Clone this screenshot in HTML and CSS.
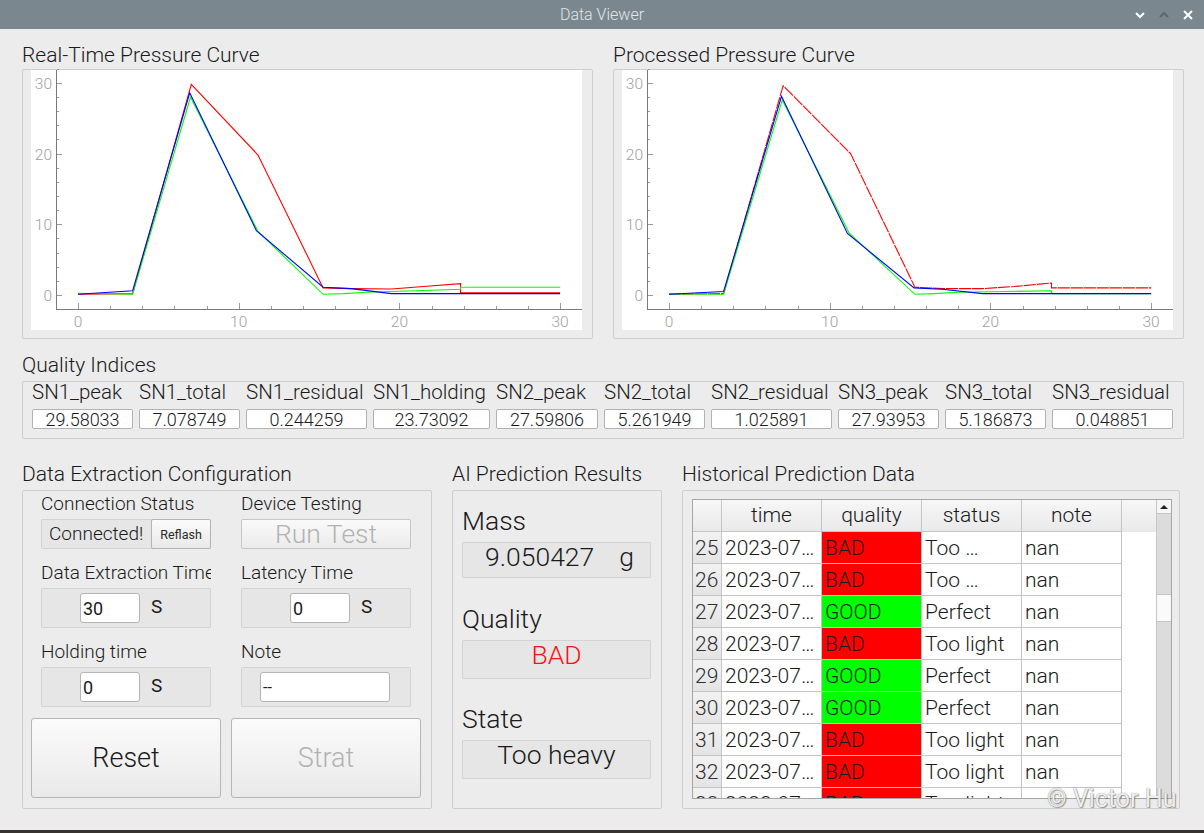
FILE: index.html
```html
<!DOCTYPE html>
<html lang="en">
  <head>
    <meta charset="UTF-8" />
    <meta name="viewport" content="width=device-width, initial-scale=1.0" />
    <title>Data Viewer</title>
    <link rel="stylesheet" href="styles.css">
  </head>

  <body>
    <div class="window">
      <div class="titlebar">
        <div></div>
        <div class="title">Data Viewer</div>
        <div class="controls">
          <svg width="70" height="29" viewBox="0 0 70 29">
            <polyline points="2,13 6,17 10,13" fill="none" stroke="#ffffff" stroke-width="2" />
            <polyline points="26,17 30,13 34,17" fill="none" stroke="#5d676c" stroke-width="2" />
            <line x1="50" y1="11" x2="58" y2="19" stroke="#ffffff" stroke-width="2" />
            <line x1="58" y1="11" x2="50" y2="19" stroke="#ffffff" stroke-width="2" />
          </svg>
        </div>
      </div>

      <div class="content">
        <div class="charts">
          <div class="panel">
            <h2 class="heading">Real-Time Pressure Curve</h2>
            <div class="chart-box"><svg class="plot" id="plot1" width="551" height="260"></svg></div>
          </div>
          <div class="panel">
            <h2 class="heading">Processed Pressure Curve</h2>
            <div class="chart-box"><svg class="plot" id="plot2" width="551" height="260"></svg></div>
          </div>
        </div>

        <h2 class="heading quality-title">Quality Indices</h2>
        <div class="indices">
          <div class="index w101"><div class="index-name">SN1_peak</div><div class="index-value">29.58033</div></div>
          <div class="index w101"><div class="index-name">SN1_total</div><div class="index-value">7.078749</div></div>
          <div class="index w121"><div class="index-name">SN1_residual</div><div class="index-value">0.244259</div></div>
          <div class="index w117"><div class="index-name">SN1_holding</div><div class="index-value">23.73092</div></div>
          <div class="index w102"><div class="index-name">SN2_peak</div><div class="index-value">27.59806</div></div>
          <div class="index w101"><div class="index-name">SN2_total</div><div class="index-value">5.261949</div></div>
          <div class="index w121"><div class="index-name">SN2_residual</div><div class="index-value">1.025891</div></div>
          <div class="index w101"><div class="index-name">SN3_peak</div><div class="index-value">27.93953</div></div>
          <div class="index w101"><div class="index-name">SN3_total</div><div class="index-value">5.186873</div></div>
          <div class="index w121"><div class="index-name">SN3_residual</div><div class="index-value">0.048851</div></div>
        </div>

        <div class="bottom">
          <div class="config-panel">
            <h2 class="heading">Data Extraction Configuration</h2>
            <div class="group config-box">
              <div class="cfg-row">
                <div class="cfg-item">
                  <div class="cfg-label">Connection Status</div>
                  <div class="field status-field">
                    <span class="status-text">Connected!</span>
                    <button class="small-btn">Reflash</button>
                  </div>
                </div>
                <div class="cfg-item">
                  <div class="cfg-label">Device Testing</div>
                  <button class="run-btn">Run Test</button>
                </div>
              </div>
              <div class="cfg-row">
                <div class="cfg-item">
                  <div class="cfg-label clip">Data Extraction Time</div>
                  <div class="field unit-field pad-a">
                    <div class="num-input">30</div><span class="unit">S</span>
                  </div>
                </div>
                <div class="cfg-item">
                  <div class="cfg-label">Latency Time</div>
                  <div class="field unit-field pad-b">
                    <div class="num-input">0</div><span class="unit">S</span>
                  </div>
                </div>
              </div>
              <div class="cfg-row">
                <div class="cfg-item">
                  <div class="cfg-label">Holding time</div>
                  <div class="field unit-field pad-a">
                    <div class="num-input">0</div><span class="unit">S</span>
                  </div>
                </div>
                <div class="cfg-item">
                  <div class="cfg-label">Note</div>
                  <div class="field unit-field note-field">
                    <div class="num-input note-input">--</div>
                  </div>
                </div>
              </div>
              <div class="cfg-buttons">
                <button class="big-btn">Reset</button>
                <button class="big-btn disabled">Strat</button>
              </div>
            </div>
          </div>

          <div class="ai-panel">
            <h2 class="heading">AI Prediction Results</h2>
            <div class="group ai-box">
              <div class="ai-label">Mass</div>
              <div class="ai-value mass"><span>9.050427</span><span>g</span></div>
              <div class="ai-label gap-q">Quality</div>
              <div class="ai-value tall bad">BAD</div>
              <div class="ai-label gap-s">State</div>
              <div class="ai-value tall">Too heavy</div>
            </div>
          </div>

          <div class="history-panel">
            <h2 class="heading">Historical Prediction Data</h2>
            <div class="group history-box">
              <div class="table-frame">
                <div class="table-view">
                  <div class="thead">
                    <div class="cell rh"></div>
                    <div class="cell hc">time</div>
                    <div class="cell hc">quality</div>
                    <div class="cell hc">status</div>
                    <div class="cell hc">note</div>
                  </div>
                  <div id="rows"></div>
                </div>
                <div class="scrollbar">
                  <div class="sb-btn"><svg width="14" height="14" viewBox="0 0 14 14"><polygon points="3,9 7,5 11,9" fill="#222" /></svg></div>
                  <div class="sb-handle"></div>
                </div>
              </div>
            </div>
          </div>
        </div>
      </div>

      <div class="watermark">© Victor Hu</div>
    </div>

    <script>
      const history = [
        [25, "BAD", "Too …"],
        [26, "BAD", "Too …"],
        [27, "GOOD", "Perfect"],
        [28, "BAD", "Too light"],
        [29, "GOOD", "Perfect"],
        [30, "GOOD", "Perfect"],
        [31, "BAD", "Too light"],
        [32, "BAD", "Too light"],
        [33, "BAD", "Too light"]
      ];

      document.getElementById("rows").innerHTML = history
        .map(
          (r) =>
            `<div class="trow">
              <div class="cell rh">${r[0]}</div>
              <div class="cell td">2023-07…</div>
              <div class="cell td ${r[1] === "BAD" ? "red" : "green"}">${r[1]}</div>
              <div class="cell td">${r[2]}</div>
              <div class="cell td">nan</div>
            </div>`
        )
        .join("");

      // pixel mapping inside the white plot area
      function px(x) {
        return 47 + x * 16.07;
      }
      function py(v) {
        return 225 - v * 7.07;
      }

      function drawChart(id, series) {
        let s = "";
        s += `<line x1="25.5" y1="0" x2="25.5" y2="239.5" stroke="#7a7a7a" />`;
        s += `<line x1="25" y1="239.5" x2="551" y2="239.5" stroke="#7a7a7a" />`;
        for (let x = 0; x <= 30; x += 2) {
          const len = x % 10 === 0 ? 6 : 3;
          const X = Math.round(px(x)) + 0.5;
          s += `<line x1="${X}" y1="239" x2="${X}" y2="${239 - len}" stroke="#9a9a9a" />`;
        }
        for (let v = 0; v <= 32; v += 2) {
          const len = v % 10 === 0 ? 5 : 2;
          const Y = Math.round(py(v)) + 0.5;
          s += `<line x1="26" y1="${Y}" x2="${26 + len}" y2="${Y}" stroke="#9a9a9a" />`;
        }
        [0, 10, 20, 30].forEach((v) => {
          s += `<text x="21" y="${py(v) + 6}" text-anchor="end" class="tick">${v}</text>`;
          s += `<text x="${px(v)}" y="257" text-anchor="middle" class="tick">${v}</text>`;
        });
        series.forEach((line) => {
          const pts = line.points.map((p) => px(p[0]).toFixed(1) + "," + py(p[1]).toFixed(1)).join(" ");
          s += `<polyline points="${pts}" fill="none" stroke="${line.color}" stroke-width="1.1" ${line.dash ? 'stroke-dasharray="' + line.dash + '"' : ""} />`;
        });
        document.getElementById(id).innerHTML = s;
      }

      drawChart("plot1", [
        { color: "#ff0000", points: [[0, 0.1], [3.4, 0.2], [7.05, 29.8], [11.2, 19.8], [15.25, 1.0], [17, 0.9], [19.5, 0.85], [21.5, 1.2], [23.8, 1.6], [23.8, 0.3], [30, 0.3]] },
        { color: "#00ff00", points: [[0, 0.25], [3.4, 0.1], [7.0, 28], [11.2, 9], [15.25, 0.1], [16.5, 0.2], [18, 0.4], [21, 0.6], [23.8, 0.8], [23.8, 1.1], [30, 1.1]] },
        { color: "#0000ff", points: [[0, 0.1], [3.4, 0.6], [6.95, 28.6], [11.1, 9.1], [15.25, 1.1], [17, 0.9], [19.5, 0.2], [30, 0.2]] }
      ]);

      drawChart("plot2", [
        { color: "#ff0000", dash: "12 1", points: [[0, 0.1], [3.4, 0.2], [7.1, 29.6], [11.3, 20], [15.3, 1.1], [17, 0.9], [19.5, 0.9], [21.5, 1.2], [23.8, 1.7], [23.8, 1.0], [30, 1.0]] },
        { color: "#00ff00", points: [[0, 0.15], [3.4, 0.1], [7.05, 27.6], [11.2, 8.8], [15.3, 0.1], [16.5, 0.2], [18, 0.4], [21, 0.5], [23.8, 0.6], [23.8, 0.2], [30, 0.2]] },
        { color: "#0000ff", points: [[0, 0.1], [3.4, 0.5], [7.0, 28.1], [11.1, 8.7], [15.25, 1.0], [17, 0.8], [19.5, 0.2], [30, 0.2]] }
      ]);
    </script>
  </body>
</html>
```

FILE: styles.css
```css
* {
  box-sizing: border-box;
}

body {
  margin: 0;
  background-color: #3a332d;
  font-family: Roboto, "Liberation Sans", sans-serif;
  font-weight: 300;
  color: #1a1a1a;
}

.window {
  position: relative;
  width: 1204px;
  height: 830px;
  background-color: #ececec;
  overflow: hidden;
}

.titlebar {
  display: grid;
  grid-template-columns: 1fr auto 1fr;
  align-items: center;
  height: 29px;
  background-color: #7b878e;
}

.titlebar .title {
  color: #e2e6e9;
  font-size: 16px;
}

.titlebar .controls {
  display: flex;
  justify-content: flex-end;
}

.titlebar svg {
  display: block;
}

.content {
  padding: 14px 20px 0 22px;
}

.heading {
  margin: 0;
  font-size: 21px;
  font-weight: 300;
  line-height: 24px;
  color: #1a1a1a;
  white-space: nowrap;
}

/* charts */

.charts {
  display: flex;
  gap: 20px;
}

.panel {
  width: 571px;
}

.panel .heading {
  margin-bottom: 2px;
}

.chart-box {
  height: 270px;
  border: 1px solid #cecece;
  border-radius: 2px;
  padding: 0 10px 8px 8px;
}

.plot {
  display: block;
  background-color: #ffffff;
  overflow: visible;
}

.plot .tick {
  font-family: Roboto, "Liberation Sans", sans-serif;
  font-weight: 300;
  font-size: 15.5px;
  fill: #a0a0a0;
}

/* quality indices */

.quality-title {
  margin-top: 14px;
  margin-bottom: 4px;
}

.indices {
  display: flex;
  gap: 6px;
  height: 58px;
  border: 1px solid #cecece;
  border-radius: 2px;
  padding: 1px 0 0 9px;
}

.index-name {
  font-size: 20.5px;
  line-height: 18px;
  white-space: nowrap;
}

.index-value {
  margin-top: 8px;
  height: 20px;
  background-color: #ffffff;
  border: 1px solid #b2b2b2;
  border-radius: 2px;
  text-align: center;
  font-size: 18px;
  line-height: 19px;
}

.w101 { width: 101px; }
.w102 { width: 102px; }
.w117 { width: 117px; }
.w121 { width: 121px; }

/* bottom section */

.bottom {
  display: flex;
  gap: 20px;
  margin-top: 23px;
}

.bottom .heading {
  margin-bottom: 4px;
}

.group {
  height: 319px;
  border: 1px solid #cecece;
  border-radius: 2px;
}

.config-panel {
  width: 410px;
}

.config-box {
  padding: 2px 19px 0 18px;
}

.cfg-row {
  display: grid;
  grid-template-columns: 170px 170px;
  column-gap: 30px;
  margin-top: 13px;
}

.cfg-row:first-child {
  margin-top: 0;
}

.cfg-label {
  font-size: 19px;
  line-height: 22px;
  margin-bottom: 4px;
  white-space: nowrap;
}

.cfg-label.clip {
  overflow: hidden;
}

.field {
  background-color: #e6e6e6;
  border: 1px solid #d3d3d3;
  border-radius: 1px;
}

.status-field {
  display: flex;
  justify-content: space-between;
  height: 30px;
}

.status-text {
  padding-left: 7px;
  font-size: 19px;
  line-height: 28px;
}

.small-btn {
  width: 60px;
  margin: -1px -1px -1px 0;
  background: linear-gradient(#fbfbfb, #e9e9e9);
  border: 1px solid #b4b4b4;
  border-radius: 2px;
  font-family: Roboto, "Liberation Sans", sans-serif;
  font-weight: 400;
  font-size: 12.5px;
  color: #2a2a2a;
  padding: 0;
}

.run-btn {
  width: 170px;
  height: 30px;
  background: linear-gradient(#fafafa, #ebebeb);
  border: 1px solid #c6c6c6;
  border-radius: 2px;
  font-family: Roboto, "Liberation Sans", sans-serif;
  font-weight: 300;
  font-size: 26.5px;
  line-height: 26px;
  color: #b2b2b2;
  padding: 0;
}

.unit-field {
  display: flex;
  align-items: center;
  height: 40px;
}

.pad-a {
  padding-left: 38px;
}

.pad-b {
  padding-left: 48px;
}

.note-field {
  padding-left: 18px;
}

.num-input {
  width: 60px;
  height: 30px;
  background-color: #ffffff;
  border: 1px solid #b4b4b4;
  border-radius: 3px;
  padding-left: 2px;
  font-size: 18px;
  font-weight: 400;
  line-height: 30px;
}

.note-input {
  width: 130px;
  font-size: 16px;
}

.unit {
  margin-left: 11px;
  margin-top: -4px;
  font-size: 19px;
  font-weight: 400;
}

.cfg-buttons {
  display: flex;
  gap: 10px;
  margin: 11px -10px 0 -10px;
}

.big-btn {
  width: 190px;
  height: 80px;
  background: linear-gradient(#fbfbfb, #e9e9e9);
  border: 1px solid #b6b6b6;
  border-radius: 3px;
  font-family: Roboto, "Liberation Sans", sans-serif;
  font-weight: 300;
  font-size: 27px;
  color: #1a1a1a;
  padding: 0;
}

.big-btn.disabled {
  color: #b2b2b2;
}

/* AI prediction */

.ai-panel {
  width: 210px;
}

.ai-box {
  padding: 14px 10px 0 9px;
}

.ai-label {
  font-size: 26.5px;
  line-height: 32px;
  margin-bottom: 5px;
}

.gap-q {
  margin-top: 25px;
}

.gap-s {
  margin-top: 24px;
}

.ai-value {
  height: 36px;
  background-color: #e6e6e6;
  border: 1px solid #d3d3d3;
  border-radius: 1px;
  font-size: 26.5px;
  line-height: 28px;
  text-align: center;
}

.ai-value.tall {
  height: 39px;
}

.ai-value.mass {
  display: flex;
  justify-content: center;
  gap: 25px;
  padding-left: 6px;
}

.ai-value.bad {
  color: #ff1010;
}

/* history table */

.history-panel {
  width: 498px;
}

.history-box {
  padding: 8px 7px 0 9px;
}

.table-frame {
  display: flex;
  height: 300px;
  border: 1px solid #a6a6a6;
  overflow: hidden;
}

.table-view {
  flex: 1;
  background-color: #ffffff;
  overflow: hidden;
}

.thead {
  display: flex;
  height: 32px;
  background: linear-gradient(#f7f7f7, #e9e9e9);
}

.trow {
  display: flex;
  height: 32px;
}

.cell {
  height: 32px;
  border-right: 1px solid #c4c4c4;
  border-bottom: 1px solid #c4c4c4;
  font-size: 21px;
  line-height: 31px;
  white-space: nowrap;
  overflow: hidden;
}

.cell.rh {
  width: 29px;
  padding-left: 2px;
  padding-top: 1px;
  background: linear-gradient(#f2f2f2, #e4e4e4);
  color: #303030;
}

.thead .cell.rh {
  padding: 0;
  background: transparent;
}

.cell.hc {
  width: 100px;
  text-align: center;
}

.cell.td {
  width: 100px;
  padding-left: 3px;
  padding-top: 1px;
}

.cell.red {
  background-color: #ff0000;
}

.cell.green {
  background-color: #00ff00;
}

.scrollbar {
  width: 15px;
  background-color: #dcdcdc;
  border-left: 1px solid #c6c6c6;
}

.sb-btn {
  height: 14px;
  background-color: #f6f6f6;
  border-bottom: 1px solid #c6c6c6;
}

.sb-btn svg {
  display: block;
}

.sb-handle {
  height: 28px;
  margin-top: 80px;
  background-color: #fafafa;
  border-top: 1px solid #c6c6c6;
  border-bottom: 1px solid #c6c6c6;
}

.watermark {
  position: absolute;
  left: 1047px;
  top: 784px;
  font-size: 25px;
  font-weight: 400;
  line-height: 29px;
  color: rgba(255, 255, 255, 0.9);
  text-shadow: 0 0 1px #6a6a6a, 1px 1px 1px rgba(0, 0, 0, 0.35);
  white-space: nowrap;
}
```
